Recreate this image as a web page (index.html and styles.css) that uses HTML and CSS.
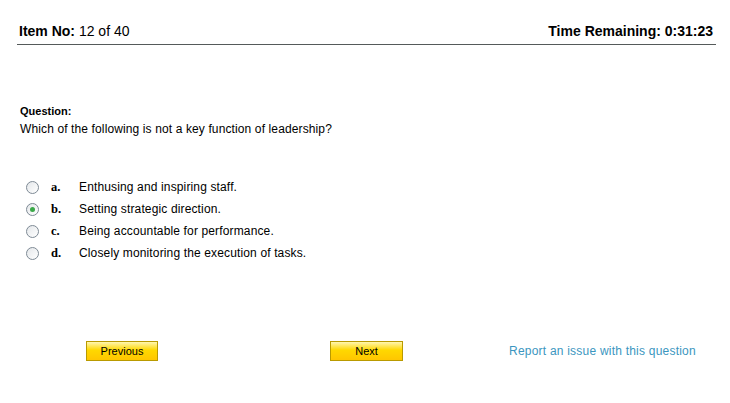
FILE: index.html
```html
<!DOCTYPE html>
<html>
<head>
<meta charset="utf-8">
<link rel="stylesheet" href="styles.css">
</head>
<body>
<div class="page">
  <div class="header">
    <div class="item"><b>Item No:</b> 12 of 40</div>
    <div class="time"><b>Time Remaining: 0:31:23</b></div>
  </div>
  <div class="question">
    <div class="qlabel">Question:</div>
    <div class="qtext">Which of the following is not a key function of leadership?</div>
  </div>
  <div class="options">
    <div class="opt"><span class="radio"></span><span class="letter">a.</span><span class="otext">Enthusing and inspiring staff.</span></div>
    <div class="opt"><span class="radio checked"></span><span class="letter">b.</span><span class="otext">Setting strategic direction.</span></div>
    <div class="opt"><span class="radio"></span><span class="letter">c.</span><span class="otext">Being accountable for performance.</span></div>
    <div class="opt"><span class="radio"></span><span class="letter">d.</span><span class="otext">Closely monitoring the execution of tasks.</span></div>
  </div>
  <div class="footer">
    <div class="btn prev">Previous</div>
    <div class="btn next">Next</div>
    <a class="report">Report an issue with this question</a>
  </div>
</div>
</body>
</html>
```
FILE: styles.css
```css
html, body {
  margin: 0;
  padding: 0;
  background: #ffffff;
}
body {
  font-family: "Liberation Sans", Arial, sans-serif;
  color: #000;
}
.page {
  width: 699px;
  margin-left: 17px;
}
.header {
  display: flex;
  justify-content: space-between;
  align-items: flex-end;
  height: 45px;
  border-bottom: 1px solid #555a5a;
  font-size: 14px;
  box-sizing: border-box;
  padding: 0 3px 5px 2px;
}
.header b { font-weight: bold; }
.question {
  padding: 60px 0 0 3px;
}
.qlabel {
  font-size: 11px;
  font-weight: bold;
  line-height: 13px;
}
.qtext {
  font-size: 12px;
  line-height: 15px;
  margin-top: 4px;
  letter-spacing: 0.12px;
}
.options {
  margin-top: 39px;
  padding-left: 9px;
}
.opt {
  display: flex;
  align-items: center;
  height: 22px;
  font-size: 12px;
}
.otext {
  letter-spacing: 0.14px;
}
.radio {
  width: 11px;
  height: 11px;
  border: 1px solid #7e8a95;
  border-radius: 50%;
  background: linear-gradient(135deg, #e4e7ea, #ffffff);
  position: relative;
  flex: none;
}
.radio.checked::after {
  content: "";
  position: absolute;
  left: 3px;
  top: 3px;
  width: 5px;
  height: 5px;
  border-radius: 50%;
  background: #3aa848;
}
.letter {
  font-family: "Liberation Serif", "Times New Roman", serif;
  font-weight: bold;
  font-size: 12.5px;
  width: 28px;
  margin-left: 12px;
}
.footer {
  display: flex;
  align-items: center;
  margin-top: 77px;
  height: 20px;
}
.btn {
  box-sizing: border-box;
  height: 20px;
  border: 1px solid #b99a00;
  background: linear-gradient(to bottom, #fff6b0 0%, #ffd800 45%, #ffc600 100%);
  font-size: 11px;
  text-align: center;
  line-height: 18px;
}
.prev {
  width: 72px;
  margin-left: 69px;
}
.next {
  width: 73px;
  margin-left: 172px;
}
.report {
  margin-left: 106px;
  font-size: 12px;
  letter-spacing: 0.22px;
  color: #3b96c0;
  text-decoration: none;
}
```
